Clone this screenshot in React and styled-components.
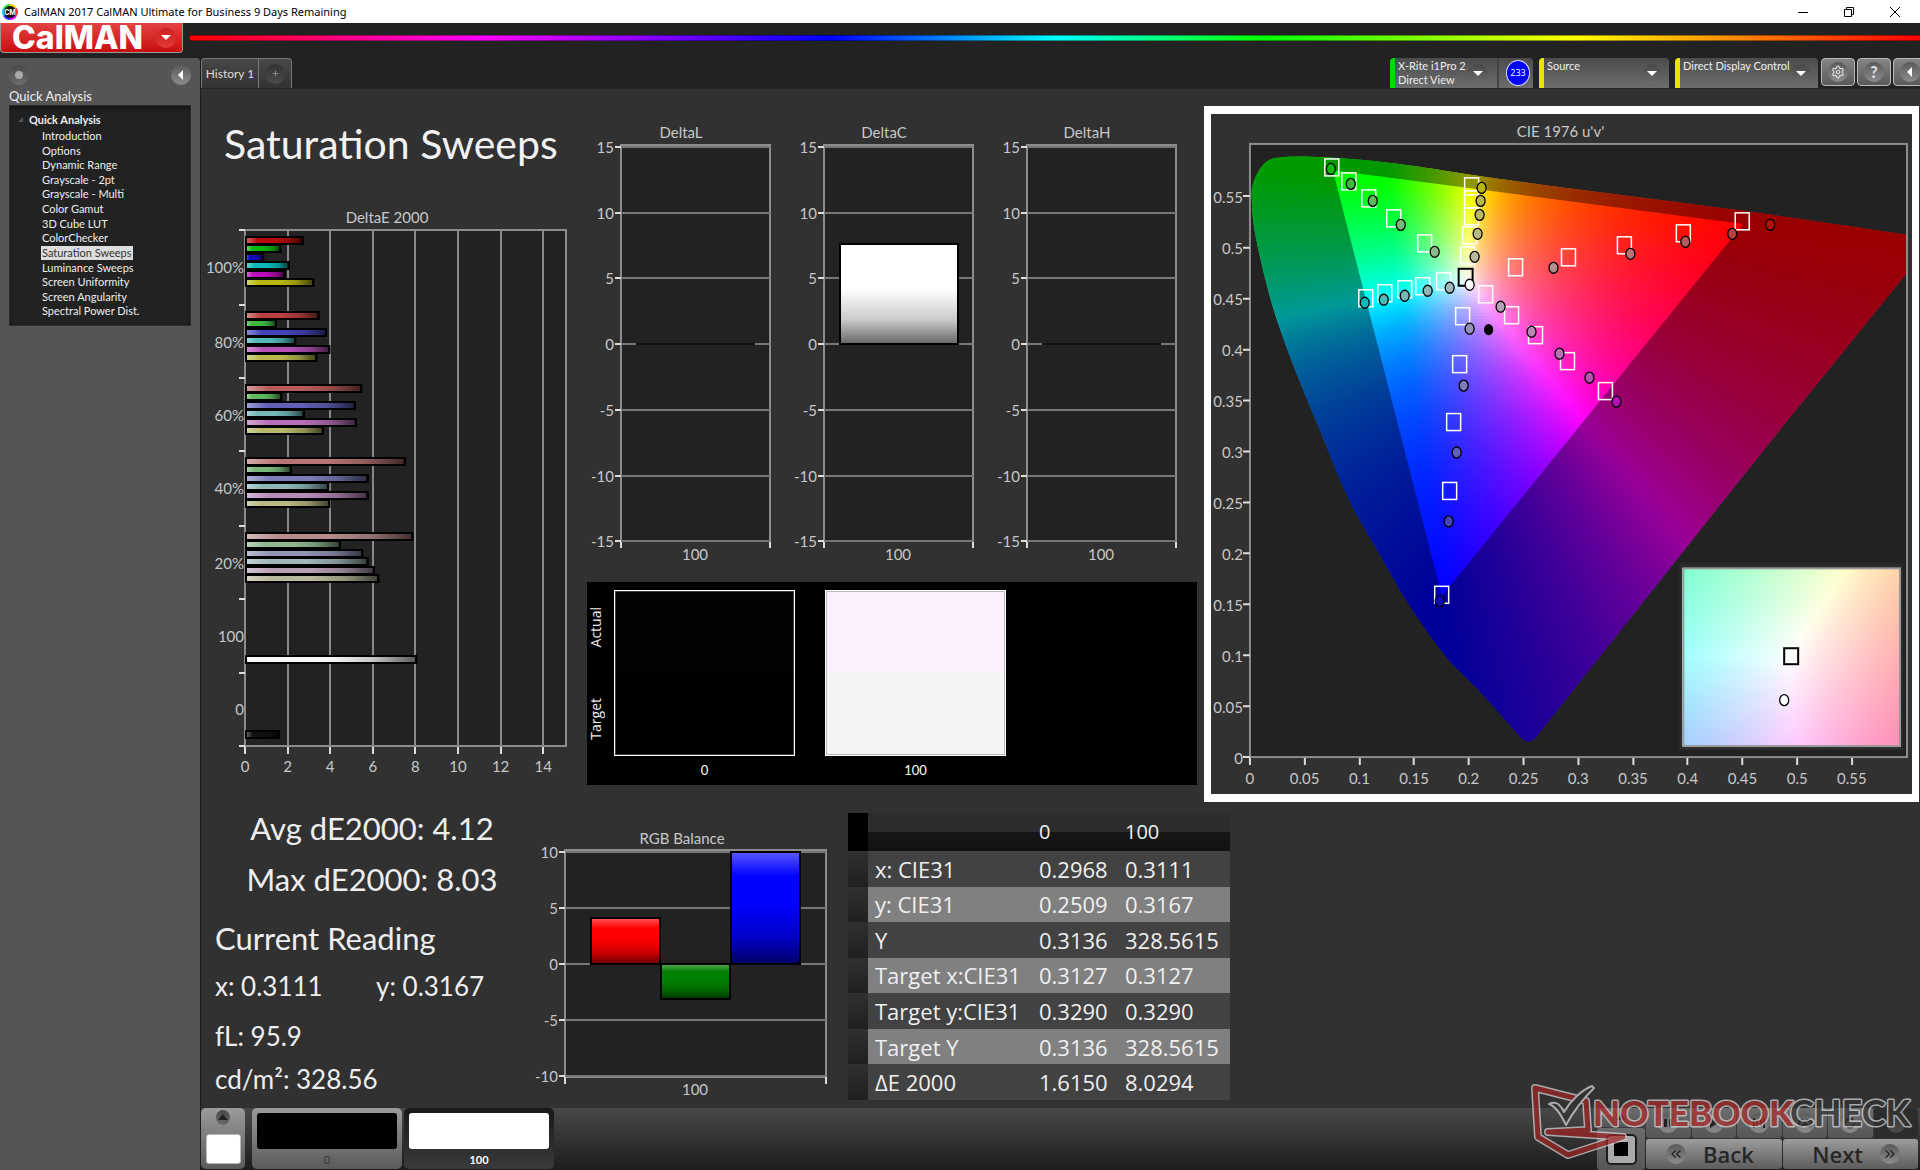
import styled, { createGlobalStyle } from "styled-components"
import { Settings, ChevronsLeft, ChevronsRight, Plus } from "lucide-react"


const UI = `Lato, "Open Sans", sans-serif`
const SEGOE = `"Open Sans", "Noto Sans", sans-serif`


const GlobalStyle = createGlobalStyle`
    * {
        box-sizing: border-box;
    }

    body {
        margin: 0;
        background: #313131;
        color: #eee;
        font-family: ${UI};
    }

    button {
        font-family: inherit;
        color: inherit;
        border: 0;
        padding: 0;
        margin: 0;
    }
`


/* ---------- data ---------- */

const pages = [
    "Introduction", "Options", "Dynamic Range", "Grayscale - 2pt", "Grayscale - Multi",
    "Color Gamut", "3D Cube LUT", "ColorChecker", "Saturation Sweeps", "Luminance Sweeps",
    "Screen Uniformity", "Screen Angularity", "Spectral Power Dist."
]

const shades = {
    "100%": ["#b80c0c", "#0cb80c", "#0c0cb8", "#0cb8b8", "#b80cb8", "#b8b80c"],
    "80%": ["#b84040", "#40b840", "#4444b8", "#50b8b8", "#b850b8", "#b8b84c"],
    "60%": ["#b85a5a", "#5cb85c", "#6060b8", "#74b8b8", "#b870b8", "#b8b868"],
    "40%": ["#b87474", "#78b878", "#7c7cb8", "#8cb8b8", "#b888b8", "#b8b880"],
    "20%": ["#b88c8c", "#90b890", "#9494b8", "#a0b8b8", "#b8a0b8", "#b8b89c"]
}

const sweeps = [
    { label: "100%", y: 35, values: [2.75, 1.7, 0.9, 2.1, 1.9, 3.25] },
    { label: "80%", y: 110, values: [3.5, 1.5, 3.85, 2.4, 4, 3.4] },
    { label: "60%", y: 183, values: [5.5, 1.75, 5.2, 2.8, 5.25, 3.7] },
    { label: "40%", y: 256, values: [7.55, 2.2, 5.8, 3.95, 5.8, 4] },
    { label: "20%", y: 331, values: [7.9, 4.5, 5.55, 5.8, 6.1, 6.3] }
]

const readings = [
    { name: "x: CIE31", black: "0.2968", white: "0.3111" },
    { name: "y: CIE31", black: "0.2509", white: "0.3167" },
    { name: "Y", black: "0.3136", white: "328.5615" },
    { name: "Target x:CIE31", black: "0.3127", white: "0.3127" },
    { name: "Target y:CIE31", black: "0.3290", white: "0.3290" },
    { name: "Target Y", black: "0.3136", white: "328.5615" },
    { name: "ΔE 2000", black: "1.6150", white: "8.0294" }
]

// target squares and measured dots, from 20% to 100% saturation
const targets = [
    [[305, 153], [358, 143], [414, 131], [473, 119], [532, 107]],
    [[214, 129], [183, 104], [158, 84], [138, 67], [121, 53]],
    [[252, 202], [249, 250], [243, 308], [239, 377], [231, 481]],
    [[233, 167], [212, 172], [194, 175], [174, 179], [155, 184]],
    [[275, 180], [301, 201], [325, 221], [357, 247], [395, 277]],
    [[257, 141], [259, 121], [261, 102], [261, 85], [261, 72]]
]

const measured = [
    [[343, 154], [420, 140], [475, 128], [522, 120], [560, 111]],
    [[224, 138], [190, 111], [162, 87], [140, 70], [120, 55]],
    [[259, 215], [253, 272], [246, 339], [238, 408], [229, 488]],
    [[239, 174], [217, 177], [194, 182], [173, 186], [154, 189]],
    [[290, 193], [321, 218], [349, 240], [379, 264], [406, 288]],
    [[264, 143], [267, 120], [269, 101], [270, 87], [271, 74]]
]

const levels = ["20%", "40%", "60%", "80%", "100%"]

const locus = [
    [312, 626], [267, 576], [235, 543], [198, 491], [170, 443], [138, 386], [110, 319],
    [83, 253], [66, 206], [55, 168], [44, 119], [41, 90], [42, 70], [54, 49], [74, 43],
    [126, 44], [189, 50], [262, 61], [349, 73], [526, 96], [697, 121]
]


/* ---------- colour helpers ---------- */

const U = u => 39 + u * 1096
const V = v => 644 - v * 1021

// brightest sRGB colour with the given chromaticity
function brightest(X, Y, Z) {
    const rgb = [
        3.2406 * X - 1.5372 * Y - 0.4986 * Z,
        -0.9689 * X + 1.8758 * Y + 0.0415 * Z,
        0.0557 * X - 0.204 * Y + 1.057 * Z
    ].map(c => Math.max(0, c))
    const max = Math.max(...rgb)
    return `rgb(${rgb.map(c => Math.round(255 * c / max)).join(",")})`
}

const uvColor = (x, y) => {
    const u = (x - 39) / 1096
    const v = (644 - y) / 1021
    return brightest(9 * u, 4 * v, 12 - 3 * u - 20 * v)
}

// the close-up is drawn in x, y around D65
const xyColor = (px, py) => {
    const x = 0.3127 + (px - 581) * 0.00026
    const y = 0.329 - (py - 543) * 0.00026
    return brightest(x, y, 1 - x - y)
}

function smooth(points) {
    let d = `M${points[0].join(" ")}`
    for (let i = 0; i < points.length - 1; i++) {
        const a = points[i - 1] || points[i]
        const b = points[i]
        const c = points[i + 1]
        const e = points[i + 2] || c
        d += `C${b[0] + (c[0] - a[0]) / 6} ${b[1] + (c[1] - a[1]) / 6} ${c[0] - (e[0] - b[0]) / 6} ${c[1] - (e[1] - b[1]) / 6} ${c[0]} ${c[1]}`
    }
    return d
}

function ColorField({ id, x, y, width, height, color, step, cols }) {
    const rows = []
    for (let top = y; top < y + height; top += step) rows.push(top)
    const stops = Array.from({ length: cols + 1 }, (_, i) => i / cols)

    return (
        <g shapeRendering="crispEdges">
            {rows.map(top => (
                <g key={top}>
                    <linearGradient id={`${id}${top}`} gradientUnits="userSpaceOnUse" x1={x} x2={x + width} y1="0" y2="0">
                        {stops.map(s => (
                            <stop key={s} offset={s} stopColor={color(x + s * width, top + step / 2)}/>
                        ))}
                    </linearGradient>
                    <rect x={x} y={top} width={width} height={Math.min(step, y + height - top)} fill={`url(#${id}${top})`}/>
                </g>
            ))}
        </g>
    )
}


/* ---------- window chrome ---------- */

const Window = styled.div`
    display: flex;
    flex-direction: column;
    min-height: 100vh;
    background: #222;
`

const TitleBar = styled.header`
    display: flex;
    align-items: center;
    height: 23px;
    padding: 0 2px;
    background: #fff;
    color: #000;
    font-family: "Noto Sans", sans-serif;
    font-size: 11px;
    line-height: 16px;
    white-space: nowrap;

    > span {
        flex: 1;
        padding: 0 6px;
    }
`

const WindowButton = styled.button`
    width: 46px;
    height: 22px;
    background: none;
    line-height: 0;
`

const BrandRow = styled.div`
    display: flex;
    align-items: flex-start;
    gap: 7px;
    height: 35px;
`

const BrandButton = styled.button`
    display: flex;
    align-items: center;
    justify-content: space-between;
    width: 183px;
    height: 30px;
    padding: 0 6px 0 11px;
    border: 1px solid #999;
    border-top: 0;
    border-radius: 0 0 4px 4px;
    background: linear-gradient(#e34343, #c90f0f);
    color: #fff;
    font: 800 32px/28px Inter, sans-serif;
`

const Rainbow = styled.div`
    flex: 1;
    height: 6px;
    margin-top: 12px;
    border: solid rgba(0, 0, 0, 0.4);
    border-width: 1px 0;
    background: linear-gradient(to right, #f00, #f0f 17%, #00f 37%, #0ff 50%, #0f0 62%, #ff0 80%, #f00);
    background-origin: border-box;
`

const Round = styled.span`
    display: inline-flex;
    align-items: center;
    justify-content: center;
    flex: none;
    width: 20px;
    height: 20px;
    border-radius: 50%;
    background: ${p => p.$light ? "linear-gradient(#5a5a5a, #8c8c8c)" : "linear-gradient(#484848, #6c6c6c)"};
    ${p => p.$red && "background: linear-gradient(#cf2020, #e23838);"}
    ${p => p.$dim && "background: linear-gradient(#333, #4b4b4b);"}
`

const Body = styled.div`
    display: grid;
    grid-template-columns: 200px minmax(0, 1fr);
    flex: 1;
`

const Sidebar = styled.aside`
    padding: 4px 9px;
    border-radius: 0 4px 0 0;
    background: #555;
`

const SideTools = styled.div`
    display: flex;
    justify-content: space-between;
    height: 25px;

    button {
        background: none;
        line-height: 0;
    }
`

const SideTitle = styled.h2`
    margin: 0;
    font-size: 13px;
    line-height: 18px;
    font-weight: 400;
`

const Tree = styled.nav`
    height: 221px;
    padding: 5px 8px;
    border: 1px solid #2b2b2b;
    box-shadow: inset 0 3px 5px #161616;
    background: #222;
    font-size: 11px;
`

const TreeRoot = styled.div`
    display: flex;
    align-items: center;
    gap: 6px;
    height: 16px;
    margin-bottom: 2px;
    font-weight: 700;
`

const TreeList = styled.ul`
    display: grid;
    grid-auto-rows: 1fr;
    height: 190px;
    margin: 0;
    padding: 0 0 0 23px;
    list-style: none;
`

const TreeLink = styled.a`
    display: inline-block;
    padding: 0 1px;
    line-height: 14px;
    text-decoration: none;
    white-space: nowrap;
    color: ${p => p.$active ? "#333" : "#eee"};
    background: ${p => p.$active ? "#ddd" : "none"};
`

const Main = styled.main`
    display: flex;
    flex-direction: column;
    min-width: 0;
    border-left: 1px solid #1c1c1c;
    background: #313131;
`

const TabRow = styled.div`
    display: flex;
    justify-content: space-between;
    height: 30px;
    background: #222;
`

const Tabs = styled.div`
    display: flex;
    border: 1px solid #777;
    border-bottom: 0;
    border-radius: 4px 4px 0 0;
    background: linear-gradient(#484848, #333);
`

const Tab = styled.button`
    width: ${p => p.$width}px;
    border-right: ${p => p.$split ? "1px solid #777" : "0"};
    background: none;
    color: #ddd;
    font-size: 12px;
    line-height: 16px;
`

const Devices = styled.div`
    display: flex;
    gap: 6px;
`

const Device = styled.div`
    display: flex;
    align-items: center;
    width: ${p => p.$width}px;
    border-left: 5px solid ${p => p.$color};
    border-radius: 4px 4px 0 0;
    background: linear-gradient(#4c4c4c, #6c6c6c);
`

const DeviceButton = styled.button`
    display: flex;
    align-items: flex-start;
    justify-content: space-between;
    flex: 1;
    height: 30px;
    padding: 1px ${p => p.$split ? 9 : 7}px 0 3px;
    border-right: ${p => p.$split ? "2px solid #444" : "0"};
    background: none;
    color: #eee;
    font-size: 11px;
    line-height: 14px;
    text-align: left;
    white-space: nowrap;

    ${Round} {
        margin-top: 5px;
    }
`

const MeterBadge = styled.span`
    display: flex;
    align-items: center;
    justify-content: center;
    width: 24px;
    height: 26px;
    margin: 0 3px 0 7px;
    border: 1px solid #dde;
    border-radius: 50%;
    background: #00f;
    color: #fff;
    font: 400 9px/12px ${SEGOE};
`

const ToolButtons = styled.div`
    display: flex;
    gap: 2px;
    width: 99px;
    margin-left: -3px;
    overflow: hidden;
`

const ToolButton = styled.button`
    flex: none;
    width: 34px;
    height: 28px;
    border: 1px solid #bbb;
    border-radius: 4px;
    background: linear-gradient(#858585, #5a5a5a);
    color: #ddd;
    font-size: 16px;
    font-weight: 900;
    line-height: 0;
`


/* ---------- report ---------- */

const Upper = styled.section`
    display: grid;
    grid-template-columns: minmax(0, 386fr) minmax(0, 617fr) minmax(0, 716fr);
    border-top: 1px solid #262626;
`

const Lower = styled.section`
    display: grid;
    grid-template-columns: minmax(0, 340fr) minmax(0, 307fr) minmax(0, 382fr) minmax(0, 690fr);
    margin-top: 1px;
    flex: 1;
`

const PageTitle = styled.h1`
    margin: 0;
    padding: 26px 0 0 23px;
    height: 116px;
    color: #f2f2f2;
    font-weight: 400;
    font-size: 41px;
    line-height: 58px;
    white-space: nowrap;
`

const Chart = styled.svg`
    display: block;
    width: 100%;
    height: auto;
    overflow: visible;
    font-size: 15px;
    fill: #c8c8c8;
`

const DeltaRow = styled.div`
    display: grid;
    grid-template-columns: repeat(3, 1fr);
    padding: 29px 8px 0 0;
`

const Swatches = styled.div`
    display: grid;
    grid-template-columns: 27px 181px 211px;
    height: 203px;
    margin-right: 7px;
    padding-top: 8px;
    background: #000;
`

const SwatchSides = styled.div`
    display: grid;
    grid-template-rows: 74px 110px;
    justify-items: center;
    align-items: center;
    padding-right: 10px;
    font: 500 14px/18px ${SEGOE};

    span {
        writing-mode: vertical-rl;
        rotate: 180deg;
    }
`

const Swatch = styled.figure`
    margin: 0 0 0 ${p => p.$gap}px;
    width: 181px;
    text-align: center;
    font-size: 13px;
    line-height: 28px;
    color: #fff;

    div {
        height: 166px;
        border: 1px solid #fff;
        box-shadow: inset 0 0 0 1px rgba(128, 128, 128, 0.5);
        background: linear-gradient(${p => p.$actual} 50%, ${p => p.$target} 50%);
    }
`

const CiePanel = styled.div`
    align-self: start;
    margin: 17px 1px 0 0;
    border: solid #fff;
    border-width: 8px 7px;
    background: #313131;
`

const Stats = styled.div`
    color: #eee;
    white-space: nowrap;
`

const BigStat = styled.p`
    margin: 0 0 0 ${p => p.$left ? 14 : 0}px;
    padding-left: ${p => p.$left ? 0 : 19}px;
    width: 323px;
    text-align: ${p => p.$left ? "left" : "center"};
    font-size: 31px;
    line-height: ${p => p.$left ? 66 : 51}px;
`

const Stat = styled.p`
    display: flex;
    margin: 0 0 0 14px;
    font-size: 26px;
    line-height: ${p => p.$height}px;

    span {
        width: 161px;
    }
`

const Balance = styled.div`
    padding-top: 22px;
`

const ReadingTable = styled.table`
    align-self: start;
    width: 100%;
    height: 287px;
    margin-top: 10px;
    border-collapse: collapse;
    table-layout: fixed;
    font: 400 22px/34px ${SEGOE};
    color: #f0f0f0;

    th, td {
        padding: 0 0 0 7px;
        text-align: left;
        font-weight: 400;
        white-space: nowrap;
    }

    thead th {
        width: 112px;
        height: 38px;
        font-size: 20px;
        font-weight: 500;
        background: linear-gradient(#2c2c2c 50%, #171717 50%, #111);
    }

    thead th:nth-child(1) {
        width: 20px;
        background: #000;
    }

    thead th:nth-child(2) {
        width: 164px;
    }

    thead th:nth-child(3) {
        width: 86px;
    }

    tbody tr {
        background: #424242;
    }

    tbody tr:nth-child(even) {
        background: #808080;
    }

    tbody td:first-child {
        background: linear-gradient(#303030, #202020);
    }
`

const PatternBar = styled.footer`
    display: flex;
    align-items: flex-start;
    height: 62px;
    background: linear-gradient(#484848, #1d1d1d);
`

const PatternMenu = styled.button`
    display: flex;
    flex-direction: column;
    align-items: center;
    justify-content: space-between;
    width: 44px;
    height: 61px;
    margin-right: 7px;
    padding: 2px 0 5px;
    border-radius: 5px;
    background: linear-gradient(#9b9b9b, #5a5a5a);

    i {
        width: 35px;
        height: 30px;
        border: 1px solid #bbb;
        border-radius: 3px;
        background: #fff;
    }

    ${Round} {
        width: 14px;
        height: 15px;
    }
`

const Pattern = styled.button`
    width: 150px;
    height: 61px;
    margin-right: 2px;
    padding: 5px;
    border-radius: 5px;
    background: ${p => p.$active ? "linear-gradient(#181818, #3a3a3a)" : "linear-gradient(#9b9b9b, #5a5a5a)"};
    color: ${p => p.$active ? "#fff" : "#333"};
    font: ${p => p.$active ? 700 : 400} 11px/22px ${UI};

    i {
        display: block;
        height: 36px;
        border-radius: 3px;
        background: ${p => p.$color};
    }
`

const Transport = styled.div`
    display: grid;
    grid-template-columns: 48px 272px;
    column-gap: 1px;
    height: 62px;
    margin-left: auto;
    padding-right: 2px;
    box-sizing: content-box;
`

const StopColumn = styled.div`
    display: grid;
    grid-template-rows: 19px 42px;
    row-gap: 1px;
`

const TransportButton = styled.button`
    display: flex;
    align-items: center;
    justify-content: center;
    background: ${p => p.$dark ? "#2c2c2c" : "linear-gradient(#6c6c6c, #565656)"};
    border-radius: 3px;
    color: #222;
`

const StopIcon = styled.span`
    display: block;
    width: 31px;
    height: 31px;
    border: 2px solid #1c1c1c;
    border-radius: 5px;
    background: linear-gradient(#000, #000) center / 14px 14px no-repeat #aaa;
`

const TransportRows = styled.div`
    display: grid;
    grid-template-rows: 30px 30px;
    row-gap: 1px;
`

const TransportRow = styled.div`
    display: grid;
    grid-template-columns: repeat(${p => p.$cols}, 1fr);
    column-gap: 1px;
`

const StepButton = styled.button`
    display: flex;
    align-items: center;
    justify-content: ${p => p.$next ? "flex-end" : "flex-start"};
    gap: 17px;
    padding: 0 18px 0 20px;
    border-radius: 3px;
    background: linear-gradient(#9c9c9c, #5c5c5c);
    color: #262626;
    font: 600 22px/28px ${SEGOE};
`

const Watermark = styled.svg`
    position: absolute;
    right: 4px;
    bottom: 4px;
    width: 390px;
    height: 90px;
    opacity: 0.7;
    pointer-events: none;
    font: 700 36px Lato, sans-serif;
`

const Shell = styled.div`
    position: relative;
`


/* ---------- small drawings ---------- */

function Arrow({ dir = "down", color = "#fff" }) {
    const d = { down: "M0 2h10L5 7z", left: "M7 0v10L2 5z", up: "M0 7h10L5 1z" }[dir]
    return <svg width="10" height="10" viewBox="0 0 10 10"><path d={d} fill={color}/></svg>
}

function AppIcon() {
    return (
        <svg width="16" height="16" viewBox="0 0 16 16">
            <circle cx="8" cy="8" r="7" fill="#111"/>
            <g fill="none" strokeWidth="2">
                <path d="M8 1a7 7 0 0 1 6 3.500" stroke="#fc0"/>
                <path d="M14 4.500a7 7 0 0 1 0 7" stroke="#f33"/>
                <path d="M14 11.500a7 7 0 0 1-6 3.500" stroke="#d0f"/>
                <path d="M8 15a7 7 0 0 1-6-3.500" stroke="#33f"/>
                <path d="M2 11.500a7 7 0 0 1 0-7" stroke="#0cf"/>
                <path d="M2 4.500a7 7 0 0 1 6-3.500" stroke="#3d3"/>
            </g>
            <text x="8" y="11" textAnchor="middle" fontSize="7" fontWeight="700" fill="#fff" fontFamily="Inter">CM</text>
        </svg>
    )
}

function Gloss() {
    return (
        <defs>
            <linearGradient id="glossX">
                <stop offset="0" stopColor="#fff" stopOpacity="0.4"/>
                <stop offset="0.2" stopColor="#fff" stopOpacity="0"/>
                <stop offset="0.5" stopColor="#000" stopOpacity="0"/>
                <stop offset="0.75" stopColor="#000" stopOpacity="0.2"/>
                <stop offset="1" stopColor="#000" stopOpacity="0.65"/>
            </linearGradient>
            <linearGradient id="glossY" x2="0" y2="1">
                <stop offset="0" stopColor="#fff" stopOpacity="0.35"/>
                <stop offset="0.22" stopColor="#fff" stopOpacity="0"/>
                <stop offset="0.45" stopColor="#000" stopOpacity="0"/>
                <stop offset="0.75" stopColor="#000" stopOpacity="0.2"/>
                <stop offset="1" stopColor="#000" stopOpacity="0.6"/>
            </linearGradient>
        </defs>
    )
}

function Bar({ x, y, width, height, color, gloss }) {
    return (
        <g stroke="#000" strokeWidth="2">
            <rect x={x} y={y} width={width} height={height} fill={color}/>
            <rect x={x} y={y} width={width} height={height} fill={`url(#${gloss})`}/>
        </g>
    )
}


/* ---------- charts ---------- */

function DeltaEChart() {
    const x = v => 44 + v * 21.3
    return (
        <Chart viewBox="0 0 386 595">
            <Gloss/>
            <text x="186" y="18" textAnchor="middle">DeltaE 2000</text>
            <rect x="44" y="25" width="321" height="516" fill="#222"/>
            {[2, 4, 6, 8, 10, 12, 14].map(v => (
                <path key={v} d={`M${Math.round(x(v))} 25v516`} stroke="#888" strokeWidth="2"/>
            ))}
            <rect x="44" y="25" width="321" height="516" fill="none" stroke="#8c8c8c" strokeWidth="2"/>
            {[25, 100, 173, 246, 321, 394, 468, 541].map(y => (
                <path key={y} d={`M38 ${y}h6`} stroke="#ddd" strokeWidth="2"/>
            ))}
            {sweeps.map(({ label, y, values }) => (
                <g key={label}>
                    <text x="43" y={y + 33} textAnchor="end">{label}</text>
                    {values.map((v, i) => (
                        <Bar key={i} x={45} y={y - 3 + Math.round(i * 8.4)} width={x(v) - 46} height={7} color={shades[label][i]} gloss="glossX"/>
                    ))}
                </g>
            ))}
            <text x="43" y="437" textAnchor="end">100</text>
            <Bar x={45} y={451} width={x(8.08) - 46} height={7} color="#f6f6f6" gloss="glossX"/>
            <text x="43" y="510" textAnchor="end">0</text>
            <Bar x={45} y={526} width={33} height={7} color="#101010" gloss="glossX"/>
            {[0, 2, 4, 6, 8, 10, 12, 14].map(v => (
                <g key={v}>
                    <path d={`M${Math.round(x(v))} 542v7`} stroke="#ddd" strokeWidth="2"/>
                    <text x={x(v)} y="567" textAnchor="middle">{v}</text>
                </g>
            ))}
        </Chart>
    )
}

function DeltaChart({ title, value }) {
    const y = v => Math.round(226 - v * 13.15)
    return (
        <Chart viewBox="0 0 203 464">
            <text x="94" y="20" textAnchor="middle">{title}</text>
            <rect x="34" y="27" width="149" height="396" fill="#222" stroke="#8c8c8c" strokeWidth="2"/>
            {[15, 10, 5, 0, -5, -10, -15].map(v => (
                <g key={v}>
                    <path d={`M34 ${y(v)}h149`} stroke="#777" strokeWidth="2"/>
                    <path d={`M28 ${y(v)}h6`} stroke="#ddd" strokeWidth="2"/>
                    <text x="27" y={y(v) + 6} textAnchor="end">{v}</text>
                </g>
            ))}
            {value
                ? <Bar x={50} y={y(value)} width={118} height={226 - y(value)} color="#fff" gloss="glossY"/>
                : <path d="M49 226h119" stroke="#111" strokeWidth="2"/>}
            <path d="M34 424v6M183 424v6" stroke="#ddd" strokeWidth="2"/>
            <text x="108" y="442" textAnchor="middle">100</text>
        </Chart>
    )
}

function BalanceChart() {
    return (
        <Chart viewBox="0 0 307 280">
            <text x="141" y="19" textAnchor="middle">RGB Balance</text>
            <rect x="24" y="25" width="261" height="227" fill="#222" stroke="#8c8c8c" strokeWidth="2"/>
            {[10, 5, 0, -5, -10].map((v, i) => (
                <g key={v}>
                    <path d={`M24 ${27 + i * 56}h261`} stroke="#777" strokeWidth="2"/>
                    <path d={`M18 ${27 + i * 56}h6`} stroke="#ddd" strokeWidth="2"/>
                    <text x="17" y={33 + i * 56} textAnchor="end">{v}</text>
                </g>
            ))}
            <Bar x={50} y={93} width={69} height={46} color="#f00" gloss="glossY"/>
            <Bar x={120} y={139} width={69} height={35} color="#008000" gloss="glossY"/>
            <Bar x={190} y={27} width={69} height={112} color="#00f" gloss="glossY"/>
            <path d="M24 252v7M285 252v7" stroke="#ddd" strokeWidth="2"/>
            <text x="154" y="270" textAnchor="middle">100</text>
        </Chart>
    )
}

function CieChart() {
    const shape = `${smooth(locus)}L697 159L562 326L522 376L324 626Q318 631 312 626Z`
    const gamut = `M${U(0.4507)} ${V(0.5229)}L${U(0.0757)} ${V(0.5757)}L${U(0.1754)} ${V(0.1579)}Z`
    return (
        <Chart viewBox="0 0 702 681">
            <clipPath id="locus"><path d={shape}/></clipPath>
            <text x="350" y="23" textAnchor="middle">CIE 1976 u'v'</text>
            <rect x="39" y="30" width="658" height="614" fill="#222"/>
            <g clipPath="url(#locus)">
                <ColorField id="c" x={39} y={40} width={658} height={592} step={3} cols={60} color={uvColor}/>
                <path d={`${shape}${gamut}`} fillRule="evenodd" fill="#000" fillOpacity="0.4"/>
            </g>
            <rect x="39" y="30" width="658" height="614" fill="none" stroke="#8c8c8c" strokeWidth="2"/>
            {Array.from({ length: 12 }, (_, i) => i * 5 / 100).map(v => (
                <g key={v}>
                    <path d={`M${Math.round(U(v))} 645v7M32 ${Math.round(V(v))}h7`} stroke="#ddd" strokeWidth="2"/>
                    <text x={U(v)} y="671" textAnchor="middle">{v}</text>
                    <text x="32" y={V(v) + 7} textAnchor="end">{v}</text>
                </g>
            ))}
            {targets.map((hue, h) => hue.map(([x, y], i) => (
                <rect key={`${h}-${i}`} x={x - 7} y={y - 8} width="14" height="17" fill="none" stroke="#fff" strokeWidth="1.500"/>
            )))}
            <rect x="248" y="155" width="14" height="17" fill="none" stroke="#000" strokeWidth="2"/>
            <g stroke="#000" strokeWidth="1.300">
                {measured.map((hue, h) => hue.map(([x, y], i) => (
                    <ellipse key={`${h}-${i}`} cx={x} cy={y} rx="4.500" ry="5.500" fill={shades[levels[i]][h]}/>
                )))}
                <ellipse cx="259" cy="171" rx="4.500" ry="5.500" fill="#fff"/>
                <ellipse cx="278" cy="216" rx="4" ry="5" fill="#000"/>
            </g>
            <rect x="469" y="450" width="224" height="187" fill="#2b2b2b"/>
            <ColorField id="i" x={472} y={455} width={218} height={178} step={2} cols={24} color={xyColor}/>
            <rect x="473" y="455" width="217" height="178" fill="none" stroke="#999" strokeWidth="2"/>
            <rect x="574" y="535" width="14" height="16" fill="none" stroke="#000" strokeWidth="2"/>
            <ellipse cx="574" cy="587" rx="4.500" ry="5.500" fill="#fff" stroke="#000" strokeWidth="1.300"/>
        </Chart>
    )
}

function Notebookcheck() {
    return (
        <Watermark viewBox="0 0 390 90">
            <g strokeLinejoin="round">
                <path d="M9 12L60 25L62 54L22 56L97 61L42 79L12 61Z" fill="none" stroke="#ddd" strokeWidth="8"/>
                <path d="M9 12L60 25L62 54L22 56L97 61L42 79L12 61Z" fill="none" stroke="#a32626" strokeWidth="5"/>
                <path d="M23 28C31 24 35 30 38 36C45 24 56 14 66 10L68 12C57 23 47 36 40 49C36 41 31 31 23 28Z" fill="#333" stroke="#ddd" strokeWidth="2"/>
            </g>
            <g stroke="#ddd" strokeWidth="3" strokeLinejoin="round" paintOrder="stroke">
                <text x="67" y="50" fill="#b02c2c" fontWeight="900" fontSize="35">NOTEBOOK</text>
                <text x="264" y="50" fill="#333">CHECK</text>
            </g>
        </Watermark>
    )
}


export default function App() {
    return (
        <Shell>
            <GlobalStyle/>
            <Window>
                <TitleBar>
                    <AppIcon/>
                    <span>CalMAN 2017 CalMAN Ultimate for Business 9 Days Remaining</span>
                    <WindowButton aria-label="Minimize">
                        <svg width="10" height="10"><path d="M0 5.500h10" stroke="#000"/></svg>
                    </WindowButton>
                    <WindowButton aria-label="Restore">
                        <svg width="10" height="10" fill="none" stroke="#000"><path d="M.5 2.500h7v7h-7zM2.500 2.500v-2h7v7h-2"/></svg>
                    </WindowButton>
                    <WindowButton aria-label="Close">
                        <svg width="10" height="10" stroke="#000"><path d="M0 0l10 10M10 0L0 10"/></svg>
                    </WindowButton>
                </TitleBar>

                <BrandRow>
                    <BrandButton>
                        CalMAN
                        <Round $red><Arrow/></Round>
                    </BrandButton>
                    <Rainbow/>
                </BrandRow>

                <Body>
                    <Sidebar>
                        <SideTools>
                            <button aria-label="Options">
                                <Round><svg width="8" height="8"><circle cx="4" cy="4" r="4" fill="#aaa"/></svg></Round>
                            </button>
                            <button aria-label="Collapse">
                                <Round $light><Arrow dir="left"/></Round>
                            </button>
                        </SideTools>
                        <SideTitle>Quick Analysis</SideTitle>
                        <Tree>
                            <TreeRoot>
                                <svg width="5" height="5"><path d="M5 0v5H0z" fill="#555"/></svg>
                                Quick Analysis
                            </TreeRoot>
                            <TreeList>
                                {pages.map(page => (
                                    <li key={page}>
                                        <TreeLink href="#" $active={page === "Saturation Sweeps"}>{page}</TreeLink>
                                    </li>
                                ))}
                            </TreeList>
                        </Tree>
                    </Sidebar>

                    <Main>
                        <TabRow>
                            <Tabs>
                                <Tab $width={57} $split>History 1</Tab>
                                <Tab $width={32} aria-label="Add tab">
                                    <Round $dim><Plus size={9} color="#999"/></Round>
                                </Tab>
                            </Tabs>
                            <Devices>
                                <Device $width={143} $color="#0d0">
                                    <DeviceButton $split>
                                        <span>X-Rite i1Pro 2<br/>Direct View</span>
                                        <Round><Arrow/></Round>
                                    </DeviceButton>
                                    <MeterBadge>233</MeterBadge>
                                </Device>
                                <Device $width={130} $color="#e6e600">
                                    <DeviceButton>Source<Round><Arrow/></Round></DeviceButton>
                                </Device>
                                <Device $width={143} $color="#e6e600">
                                    <DeviceButton>Direct Display Control<Round><Arrow/></Round></DeviceButton>
                                </Device>
                                <ToolButtons>
                                    <ToolButton aria-label="Settings"><Round $light><Settings size={14}/></Round></ToolButton>
                                    <ToolButton><Round $light>?</Round></ToolButton>
                                    <ToolButton aria-label="Collapse"><Round $light><Arrow dir="left"/></Round></ToolButton>
                                </ToolButtons>
                            </Devices>
                        </TabRow>

                        <Upper>
                            <div>
                                <PageTitle>Saturation Sweeps</PageTitle>
                                <DeltaEChart/>
                            </div>
                            <div>
                                <DeltaRow>
                                    <DeltaChart title="DeltaL" value={0}/>
                                    <DeltaChart title="DeltaC" value={7.6}/>
                                    <DeltaChart title="DeltaH" value={0}/>
                                </DeltaRow>
                                <Swatches>
                                    <SwatchSides>
                                        <span>Actual</span>
                                        <span>Target</span>
                                    </SwatchSides>
                                    <Swatch $gap={0} $actual="#030306" $target="#000"><div/>0</Swatch>
                                    <Swatch $gap={30} $actual="#fbf0fe" $target="#f4f4f4"><div/>100</Swatch>
                                </Swatches>
                            </div>
                            <CiePanel>
                                <CieChart/>
                            </CiePanel>
                        </Upper>

                        <Lower>
                            <Stats>
                                <BigStat>Avg dE2000: 4.12</BigStat>
                                <BigStat>Max dE2000: 8.03</BigStat>
                                <BigStat $left>Current Reading</BigStat>
                                <Stat $height={30}><span>x: 0.3111</span>y: 0.3167</Stat>
                                <Stat $height={70}>fL: 95.9</Stat>
                                <Stat $height={16}>cd/m²: 328.56</Stat>
                            </Stats>
                            <Balance>
                                <BalanceChart/>
                            </Balance>
                            <ReadingTable>
                                <thead>
                                    <tr><th/><th/><th>0</th><th>100</th></tr>
                                </thead>
                                <tbody>
                                    {readings.map(row => (
                                        <tr key={row.name}>
                                            <td/>
                                            <th scope="row">{row.name}</th>
                                            <td>{row.black}</td>
                                            <td>{row.white}</td>
                                        </tr>
                                    ))}
                                </tbody>
                            </ReadingTable>
                        </Lower>

                        <PatternBar>
                            <PatternMenu aria-label="Pattern menu">
                                <Round><Arrow dir="up" color="#222"/></Round>
                                <i/>
                            </PatternMenu>
                            <Pattern $color="#000"><i/>0</Pattern>
                            <Pattern $color="#fff" $active><i/>100</Pattern>
                            <Transport>
                                <StopColumn>
                                    <TransportButton aria-label="Expand"><Arrow dir="up" color="#222"/></TransportButton>
                                    <TransportButton aria-label="Stop"><StopIcon/></TransportButton>
                                </StopColumn>
                                <TransportRows>
                                    <TransportRow $cols={6}>
                                        <TransportButton aria-label="Pause"><Round $light><svg width="8" height="8"><path d="M0 0h3v8H0zM5 0h3v8H5z" fill="#222"/></svg></Round></TransportButton>
                                        <TransportButton aria-label="Play"><Round $light><svg width="8" height="10"><path d="M0 0l8 5-8 5z" fill="#222"/></svg></Round></TransportButton>
                                        <TransportButton aria-label="Read series"><Round $light><svg width="12" height="10"><path d="M1 0v10M11 0v10M4 2v6M8 2v6" stroke="#222" strokeWidth="2"/></svg></Round></TransportButton>
                                        <TransportButton aria-label="Read continuous"><Round $light><svg width="14" height="8"><path d="M7 4C5 0 1 0 1 4s4 4 6 0 6-4 6 0-4 4-6 0z" fill="none" stroke="#222" strokeWidth="2"/></svg></Round></TransportButton>
                                        <TransportButton aria-label="Refresh"><Round $light><svg width="12" height="12"><path d="M2 6a4 4 0 0 1 7-3M10 6a4 4 0 0 1-7 3" fill="none" stroke="#222" strokeWidth="2"/></svg></Round></TransportButton>
                                        <TransportButton $dark aria-label="Record"><Round $dim/></TransportButton>
                                    </TransportRow>
                                    <TransportRow $cols={2}>
                                        <StepButton><Round $light><ChevronsLeft size={16}/></Round>Back</StepButton>
                                        <StepButton $next>Next<Round $light><ChevronsRight size={16}/></Round></StepButton>
                                    </TransportRow>
                                </TransportRows>
                            </Transport>
                        </PatternBar>
                    </Main>
                </Body>
            </Window>
            <Notebookcheck/>
        </Shell>
    )
}
